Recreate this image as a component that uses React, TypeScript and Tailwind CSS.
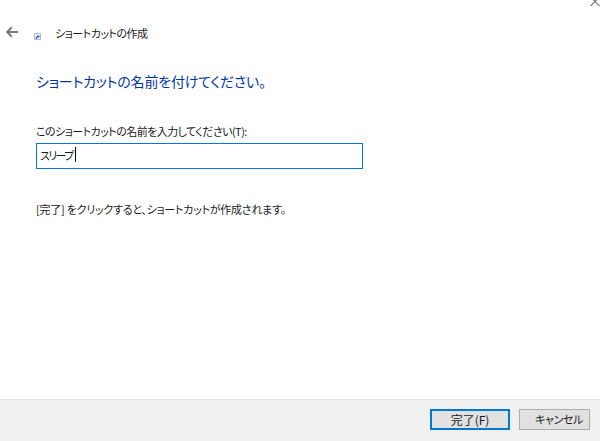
import React from "react";

const jp = "font-['Noto_Sans_CJK_JP','Noto_Sans',sans-serif] [font-feature-settings:'palt']";

function ShortcutIcon() {
  return (
    <svg width="7" height="7" viewBox="0 0 7 7" className="mt-[7px] shrink-0">
      <rect x="0" y="0" width="7" height="7" fill="#b4bccb" />
      <rect x="1" y="1" width="5" height="5" fill="#e8ecf4" />
      <path d="M2 6V4L3.5 3V2L6 3.5L3.5 5V4.2L3 5V6Z" fill="#1f5fbf" />
    </svg>
  );
}

export default function App() {
  return (
    <div className={`relative flex h-[441px] w-[600px] flex-col overflow-hidden bg-white ${jp}`}>
      {/* close glyph cut off by the crop */}
      <svg width="10" height="7" viewBox="0 0 10 7" className="absolute right-0 top-0">
        <path d="M0.5 6L5 1.5L9.5 6M5 1.5L6.5 0M5 1.5L3.5 0" stroke="#333" strokeWidth="1" fill="none" />
      </svg>

      <div className="flex-1">
        <div className="flex items-start pl-[6px] pt-[26px]">
          <svg width="12" height="12" viewBox="0 0 12 12" className="shrink-0">
            <path d="M5.8 1.2L1.2 6L5.8 10.8M1.6 6H12" stroke="#7a7a7a" strokeWidth="2" fill="none" />
          </svg>
          <div className="ml-[16px]">
            <ShortcutIcon />
          </div>
          <span className="ml-[14px] text-[11px] leading-[14px] tracking-[-0.5px] text-[#1a1a1a]">
            ショートカットの作成
          </span>
        </div>

        <div className="pl-[36px]">
          <h1 className="mt-[31px] whitespace-nowrap text-[14px] font-normal leading-[20px] tracking-[-0.2px] text-[#0033a8]">
            ショートカットの名前を付けてください。
          </h1>
          <p className="mt-[33px] whitespace-nowrap text-[11px] leading-[14px] tracking-[-0.55px] text-[#1a1a1a]">
            このショートカットの名前を入力してください(T):
          </p>
          <div className="mt-[5px] flex h-[26px] w-[327px] items-center border border-[#0078d7] pb-[3px] pl-[3px]">
            <span className="text-[11px] leading-[14px] tracking-[-1.6px] text-[#1a1a1a]">スリープ</span>
            <span className="ml-[2px] h-[15px] w-px bg-black" />
          </div>
          <p className="mt-[33px] whitespace-nowrap text-[11px] leading-[14px] tracking-[-0.25px] text-[#1a1a1a]">
            [完了] をクリックすると、ショートカットが作成されます。
          </p>
        </div>
      </div>

      <div className="flex h-[42px] items-start justify-end gap-[9px] border-t border-[#dfdfdf] bg-[#f0f0f0] pr-[10px] pt-[9px]">
        <button className="h-[21px] w-[80px] border-2 border-[#0078d7] bg-[#e1e1e1] text-[12px] leading-none text-[#1a1a1a]">
          完了(F)
        </button>
        <button className="h-[21px] w-[71px] border border-[#adadad] bg-[#e1e1e1] pl-[9px] text-[11px] leading-none tracking-[-0.4px] text-[#1a1a1a]">
          キャンセル
        </button>
      </div>
    </div>
  );
}
